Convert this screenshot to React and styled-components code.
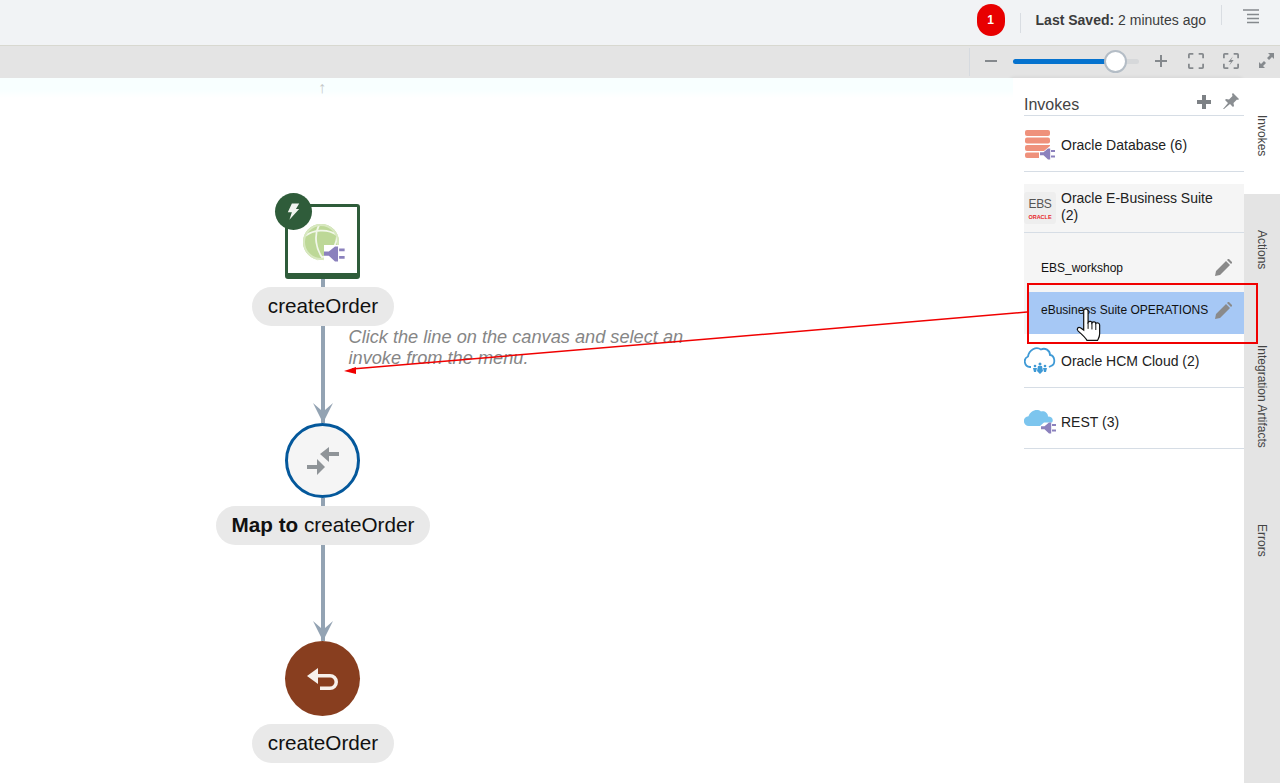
import React from "react";
import styled, { createGlobalStyle } from "styled-components";

const GlobalStyle = createGlobalStyle`
  html, body {
    margin: 0;
    padding: 0;
    background: #fff;
    font-family: "Liberation Sans", Arial, sans-serif;
  }
`;

const Page = styled.div`
  position: relative;
  width: 1280px;
  height: 783px;
  overflow: hidden;
  display: flex;
  flex-direction: column;
`;

/* top bar */
const TopBar = styled.div`
  height: 45px;
  flex: none;
  display: flex;
  justify-content: flex-end;
  align-items: flex-start;
  padding-right: 21px;
  background: #f1f3f5;
  border-bottom: 1px solid #d8d8d0;
`;
const Badge = styled.div`
  width: 28px;
  height: 32px;
  margin-top: 4px;
  border-radius: 14px;
  background: #e80000;
  color: #fff;
  font-size: 12px;
  font-weight: 700;
  display: flex;
  align-items: center;
  justify-content: center;
`;
const TopDivider = styled.div`
  width: 1px;
  height: 20px;
  margin-top: ${(p) => p.$top}px;
  margin-left: ${(p) => p.$left}px;
  background: #d9dde2;
`;
const Saved = styled.div`
  margin: 12px 0 0 15px;
  font-size: 14px;
  line-height: 16px;
  color: #3c3c3c;
  white-space: nowrap;
  b {
    font-weight: 700;
  }
`;
const MenuIcon = styled.svg`
  margin: 9px 0 0 21px;
`;

/* zoom toolbar */
const Toolbar = styled.div`
  height: 32px;
  flex: none;
  display: flex;
  justify-content: flex-end;
  align-items: center;
  gap: 11px;
  padding-right: 2px;
  background: #e4e4e4;
`;
const ToolDivider = styled.div`
  width: 1px;
  height: 28px;
  margin-right: -2px;
  background: #d6dadf;
`;
const ToolButton = styled.div`
  width: 24px;
  height: 24px;
  margin-top: -3px;
  display: flex;
  align-items: center;
  justify-content: center;
`;
const Slider = styled.div`
  position: relative;
  width: 126px;
  height: 5px;
  margin: -1px -1px 0;
  border-radius: 3px;
  background: #d6d8da;
`;
const SliderFill = styled.div`
  height: 100%;
  border-radius: 3px;
  background: #0572ce;
`;
const SliderThumb = styled.div`
  position: absolute;
  top: -9px;
  left: 91px;
  width: 19px;
  height: 19px;
  border: 2px solid #b4bdc6;
  border-radius: 50%;
  background: #fff;
`;

/* main area */
const Main = styled.div`
  flex: 1;
  display: flex;
  min-height: 0;
`;
const Canvas = styled.div`
  position: relative;
  width: 1013px;
  flex: none;
  background: linear-gradient(#f8ffff 0, #f8ffff 12px, #fff 20px);
`;
const UpHint = styled.div`
  position: absolute;
  top: 1px;
  left: 318px;
  font-size: 16px;
  line-height: 18px;
  color: #c4c8c8;
`;
const Flow = styled.div`
  width: 645px;
  padding-top: 126px;
  display: flex;
  flex-direction: column;
  align-items: center;
`;
const Connector = styled.div`
  position: relative;
  width: 4px;
  height: ${(p) => p.$height}px;
  background: #93a3b3;
`;
const ArrowHead = styled.svg`
  position: absolute;
  left: -9px;
  bottom: 0;
`;
const Hint = styled.div`
  position: absolute;
  top: 1px;
  left: 28px;
  width: 350px;
  font-size: 18.2px;
  font-style: italic;
  line-height: 21px;
  color: #868686;
`;
const TriggerBox = styled.div`
  position: relative;
  width: 75px;
  height: 75px;
  box-sizing: border-box;
  padding: 8px 0 0 5px;
  border: 3px solid #2f5c3a;
  border-bottom-width: 6px;
  border-radius: 3px;
  background: #fff;
  display: flex;
  align-items: center;
  justify-content: center;
`;
const TriggerBadge = styled.div`
  position: absolute;
  top: -14px;
  left: -13px;
  width: 37px;
  height: 37px;
  border-radius: 50%;
  background: #2f5c3a;
  display: flex;
  align-items: center;
  justify-content: center;
`;
const Circle = styled.div`
  width: 75px;
  height: 75px;
  box-sizing: border-box;
  border-radius: 50%;
  border: ${(p) => (p.$outline ? `3px solid ${p.$outline}` : "none")};
  background: ${(p) => p.$fill};
  display: flex;
  align-items: center;
  justify-content: center;
`;
const Pill = styled.div`
  height: 39px;
  margin-left: 1px;
  padding: 0 16px;
  border-radius: 20px;
  background: #e9e9e9;
  color: #111;
  font-size: 20.7px;
  line-height: 38px;
  white-space: nowrap;
  b {
    font-weight: 700;
  }
`;
const Gap = styled.div`
  height: ${(p) => p.$height}px;
`;

/* invokes panel */
const Panel = styled.div`
  width: 231px;
  flex: none;
  box-sizing: border-box;
  padding-left: 11px;
  background: #fff;
  box-shadow: -2px 0 4px rgba(0, 0, 0, 0.1);
`;
const PanelHead = styled.div`
  height: 38px;
  box-sizing: border-box;
  display: flex;
  align-items: flex-end;
  padding: 0 5px 0 0;
  border-bottom: 1px solid #d6dde5;
  color: #444;
  font-size: 16px;
  line-height: 20px;
`;
const PanelTitle = styled.div`
  flex: 1;
`;
const HeadIcon = styled.svg`
  margin-left: 12px;
  margin-bottom: 6px;
`;
const Row = styled.div`
  height: ${(p) => p.$height}px;
  box-sizing: border-box;
  padding-top: ${(p) => p.$pad || 0}px;
  display: flex;
  align-items: center;
  gap: 5px;
  border-bottom: 1px solid #d6dde5;
  background: ${(p) => (p.$open ? "#f5f5f5" : "#fff")};
  margin-top: ${(p) => p.$gap || 0}px;
  color: #222;
  font-size: 14px;
  line-height: 17px;
`;
const RowIcon = styled.div`
  width: 32px;
  flex: none;
  display: flex;
  justify-content: center;
`;
const RowLabel = styled.div`
  padding-right: 20px;
  margin-top: ${(p) => (p.$lift ? -2 : 0)}px;
`;
const EbsTile = styled.div`
  width: 32px;
  height: 32px;
  border-radius: 3px;
  background: #eeeeee;
  color: #555;
  text-align: center;
  font-size: 12px;
  letter-spacing: -0.4px;
  line-height: 13px;
  padding-top: 6px;
  box-sizing: border-box;
`;
const EbsMark = styled.div`
  margin-top: 4px;
  color: #e8262a;
  font-size: 5.5px;
  letter-spacing: 0;
  line-height: 5px;
  font-weight: 700;
`;
const SubList = styled.div`
  padding-top: 12px;
  background: #f5f5f5;
`;
const SubRow = styled.div`
  height: ${(p) => p.$height}px;
  margin-left: 5px;
  box-sizing: border-box;
  padding: 0 12px ${(p) => p.$lift || 0}px;
  display: flex;
  align-items: center;
  justify-content: space-between;
  background: ${(p) => (p.$active ? "#a6c8f5" : "transparent")};
  color: #111;
  font-size: 12px;
`;

/* side tabs */
const Tabs = styled.div`
  flex: 1;
  background: #e4e4e4;
`;
const Tab = styled.div`
  height: ${(p) => p.$height}px;
  display: flex;
  align-items: center;
  justify-content: center;
  background: ${(p) => (p.$active ? "#fff" : "transparent")};
  color: #444;
  font-size: 12px;
  span {
    writing-mode: vertical-rl;
  }
`;

/* annotation on top of the screenshot */
const Callout = styled.div`
  position: absolute;
  left: 1027px;
  top: 283px;
  width: 231px;
  height: 61px;
  box-sizing: border-box;
  border: 2px solid #f00000;
`;
const Overlay = styled.svg`
  position: absolute;
  left: 0;
  top: 0;
  pointer-events: none;
`;

const plugPath = "M0 6.2h3.5L8 2.5h2.2v11H8L3.5 9.3H0z M11 4h4v2h-4z M11 9.5h4v2h-4z";

function Plug({ x, y, size = 16 }) {
  return (
    <g transform={`translate(${x} ${y}) scale(${size / 16})`}>
      <path d={plugPath} fill="#8b81bd" />
    </g>
  );
}

function DatabaseIcon() {
  return (
    <svg width="32" height="30" viewBox="0 0 32 30">
      <rect x="1" y="0" width="25" height="6" rx="2" fill="#ef917b" />
      <rect x="1" y="7.5" width="25" height="6" rx="2" fill="#ef917b" />
      <path d="M3 15h23v1l-6 5H3a2 2 0 0 1-2-2v-2a2 2 0 0 1 2-2z" fill="#ef917b" />
      <path d="M3 22.500h12v5.500H3a2 2 0 0 1-2-2v-1.500a2 2 0 0 1 2-2z" fill="#ef917b" />
      <Plug x={16} y={16} />
    </svg>
  );
}

function HcmIcon() {
  return (
    <svg width="32" height="30" viewBox="0 0 32 30">
      <path
        d="M7 21H6a5.500 5.500 0 0 1-2-10.500C5 4 12 0 17 3.500c4-2 9 .5 9 5.500 5 .5 6 9 1 11l-2 1"
        fill="none"
        stroke="#3f9ad6"
        strokeWidth="1.800"
      />
      <g fill="#3f9ad6">
        <circle cx="16" cy="18" r="1.500" />
        <circle cx="11" cy="20" r="1.300" />
        <circle cx="21" cy="20" r="1.300" />
        <path d="M14 20h4l1 5-3 3-3-3z M9 22h4l-1 4h-2z M19 22h4l-1 4h-2z" />
      </g>
    </svg>
  );
}

function RestIcon() {
  return (
    <svg width="32" height="28" viewBox="0 0 32 28">
      <path
        d="M5 18a4.500 4.500 0 0 1-.500-9.800C6 3 13 0 17 3.500c3-1 7 1 7 5 4 0 6 3 4 6H20l-4 3.500z"
        fill="#7cc5ee"
      />
      <Plug x={17} y={12} />
    </svg>
  );
}

function Pencil() {
  return (
    <svg width="17" height="17" viewBox="0 0 17 17">
      <path d="M0 17l1-5L11 2l4 4L5 16z M12 1l1-1h1l3 3v1l-1 1z" fill="#8a8a8a" />
    </svg>
  );
}

function Corners({ children }) {
  return (
    <svg width="16" height="16" viewBox="0 0 18 18">
      <path
        d="M1 6V2a1 1 0 0 1 1-1h4 M12 1h4a1 1 0 0 1 1 1v4 M17 12v4a1 1 0 0 1-1 1h-4 M6 17H2a1 1 0 0 1-1-1v-4"
        fill="none"
        stroke="#85898d"
        strokeWidth="2"
      />
      {children}
    </svg>
  );
}

function Head() {
  return (
    <ArrowHead width="22" height="20" viewBox="0 0 22 20">
      <path d="M1 0l8 7V0h4v7l8-7-10 20z" fill="#93a3b3" />
    </ArrowHead>
  );
}

export default function App() {
  return (
    <Page>
      <GlobalStyle />
      <TopBar>
        <Badge>1</Badge>
        <TopDivider $top={13} $left={15} />
        <Saved>
          <b>Last Saved:</b> 2 minutes ago
        </Saved>
        <TopDivider $top={5} $left={15} />
        <MenuIcon width="16" height="15" viewBox="0 0 16 15">
          <path d="M0 1h16M4 5.500h12M4 9.500h12M4 13.500h12" stroke="#85898d" strokeWidth="1.500" />
        </MenuIcon>
      </TopBar>

      <Toolbar>
        <ToolDivider />
        <ToolButton>
          <svg width="12" height="2" viewBox="0 0 12 2">
            <rect width="12" height="2" fill="#85898d" />
          </svg>
        </ToolButton>
        <Slider>
          <SliderFill style={{ width: `${(103 / 126) * 100}%` }} />
          <SliderThumb />
        </Slider>
        <ToolButton>
          <svg width="12" height="12" viewBox="0 0 12 12">
            <path d="M0 6h12M6 0v12" stroke="#85898d" strokeWidth="2" />
          </svg>
        </ToolButton>
        <ToolButton>
          <Corners />
        </ToolButton>
        <ToolButton>
          <Corners>
            <path d="M11 4L6 10h3l-2 4 5-6H9z" fill="#85898d" />
          </Corners>
        </ToolButton>
        <ToolButton>
          <svg width="15" height="15" viewBox="0 0 15 15">
            <path d="M9 0h6v6l-2-2-3 3-2-2 3-3z M0 15V9l2 2 3-3 2 2-3 3 2 2z" fill="#85898d" />
          </svg>
        </ToolButton>
      </Toolbar>

      <Main>
        <Canvas>
          <UpHint>↑</UpHint>
          <Flow>
            <TriggerBox>
              <TriggerBadge>
                <svg width="13" height="17" viewBox="0 0 16 20">
                  <path d="M6 0h9l-4 7h4L3 20l3-9H1z" fill="#f2f5f0" />
                </svg>
              </TriggerBadge>
              <svg width="46" height="42" viewBox="0 0 46 42">
                <circle cx="19" cy="19" r="18" fill="#bdd897" />
                <path
                  d="M3 13c8-6 22-8 32-1M17 2c-5 10-4 24 5 35M35 12c0 10-6 20-20 25"
                  fill="none"
                  stroke="#f2f7ea"
                  strokeWidth="1.800"
                />
                <circle cx="19" cy="19" r="17" fill="none" stroke="#d8e8c0" strokeWidth="2" />
                <rect x="22" y="22" width="24" height="18" fill="#fff" />
                <Plug x={22} y={20} size={22} />
              </svg>
            </TriggerBox>
            <Connector $height={8} />
            <Pill>createOrder</Pill>
            <Connector $height={97}>
              <Hint>Click the line on the canvas and select an invoke from the menu.</Hint>
              <Head />
            </Connector>
            <Circle $fill="#f5f5f5" $outline="#04589b">
              <svg width="32" height="28" viewBox="0 0 32 28">
                <path d="M13 7l9-7v15z M22 5h10v4H22z M18 20l-8-8v16z M0 18h10v4H0z" fill="#8f9498" />
              </svg>
            </Circle>
            <Connector $height={8} />
            <Pill>
              <b>Map to</b> createOrder
            </Pill>
            <Connector $height={96}>
              <Head />
            </Connector>
            <Circle $fill="#883e1f">
              <svg width="32" height="22" viewBox="0 0 32 22">
                <path
                  d="M11 0v6h12a8 8 0 0 1 0 16H13v-3.500h10a4.500 4.500 0 0 0 0-9H11V16L0 8z"
                  fill="#f7f1ec"
                />
              </svg>
            </Circle>
            <Gap $height={8} />
            <Pill>createOrder</Pill>
          </Flow>
        </Canvas>

        <Panel>
          <PanelHead>
            <PanelTitle>Invokes</PanelTitle>
            <HeadIcon width="14" height="14" viewBox="0 0 14 14">
              <path d="M5 0h4v5h5v4H9v5H5V9H0V5h5z" fill="#7d8185" />
            </HeadIcon>
            <HeadIcon width="16" height="16" viewBox="0 0 16 16">
              <path d="M10 0l6 6-1 1-1-.5-3.500 3.500.5 3-1 1-3-3L1 16l-1 0 5-6-3-3 1-1 3 .5L9.500 3 9 1z" fill="#8a8e92" />
            </HeadIcon>
          </PanelHead>
          <Row $height={56} $pad={3}>
            <RowIcon>
              <DatabaseIcon />
            </RowIcon>
            <RowLabel>Oracle Database (6)</RowLabel>
          </Row>
          <Row $height={49} $gap={12} $open>
            <RowIcon>
              <EbsTile>
                EBS
                <EbsMark>ORACLE</EbsMark>
              </EbsTile>
            </RowIcon>
            <RowLabel $lift>Oracle E-Business Suite (2)</RowLabel>
          </Row>
          <SubList>
            <SubRow $height={47} $lift={2}>
              EBS_workshop
              <Pencil />
            </SubRow>
            <SubRow $height={42} $lift={6} $active>
              eBusiness Suite OPERATIONS
              <Pencil />
            </SubRow>
          </SubList>
          <Row $height={54} $pad={1}>
            <RowIcon>
              <HcmIcon />
            </RowIcon>
            <RowLabel>Oracle HCM Cloud (2)</RowLabel>
          </Row>
          <Row $height={61} $pad={8}>
            <RowIcon>
              <RestIcon />
            </RowIcon>
            <RowLabel>REST (3)</RowLabel>
          </Row>
        </Panel>

        <Tabs>
          <Tab $height={116} $active>
            <span>Invokes</span>
          </Tab>
          <Tab $height={112}>
            <span>Actions</span>
          </Tab>
          <Tab $height={180}>
            <span>Integration Artifacts</span>
          </Tab>
          <Tab $height={108}>
            <span>Errors</span>
          </Tab>
        </Tabs>
      </Main>

      <Callout />
      <Overlay width="1280" height="783" viewBox="0 0 1280 783">
        <path d="M1027 312L352 369" stroke="#f00000" strokeWidth="1.500" fill="none" />
        <path d="M344 371l12-4v7z" fill="#f00000" />
        <g transform="translate(1076 308) scale(1.1)">
          <path
            d="M7 3c0-3 4-3 4 0v10c1-1.500 3.500-1 3.500.5 1-1.500 3.500-1 3.500.5 1-1 3.500-.5 3.500 1.500v8c0 3-1 4-2 6H10c-1-2-4-5-8-8.500-2-2 0-4 2-3l3 2z"
            fill="#fff"
            stroke="#111"
            strokeWidth="1.100"
          />
          <path d="M11 13v6M14.500 13.500v6M18 14v6" stroke="#111" strokeWidth="0.900" fill="none" />
        </g>
      </Overlay>
    </Page>
  );
}
